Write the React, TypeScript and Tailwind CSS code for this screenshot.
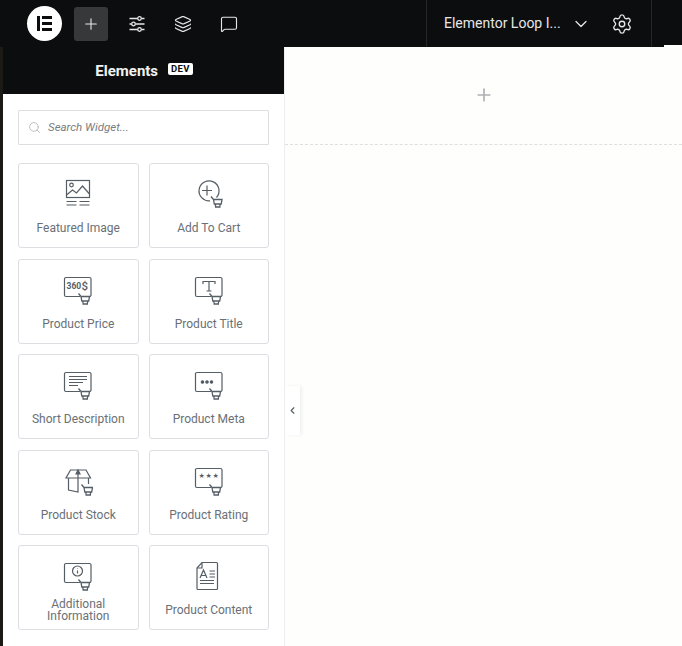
import { ChevronDown, ChevronLeft, Layers, MessageSquare, Plus, Search, Settings } from "lucide-react";
import type { ReactNode } from "react";

const Cart = ({ x, y }: { x: number; y: number }) => (
  <g transform={`translate(${x} ${y})`} strokeWidth="1.300">
    <path d="M0 0l2.500 3h8.500l-.8 4.500H3.300L2.500 3" fill="#fff" />
    <path d="M4.300 7.500l.4 3M9.200 7.500l-.4 3M4 10.500h5.500" />
  </g>
);

// speech-box shape shared by the product widgets
const Box = ({ children }: { children?: ReactNode }) => (
  <>
    <path d="M17 21.500H3a1.500 1.500 0 0 1-1.500-1.500V4A1.500 1.500 0 0 1 3 2.500h23.500A1.500 1.500 0 0 1 28 4v16a1.500 1.500 0 0 1-1.500 1.500H26" />
    {children}
    <Cart x={15.500} y={18.500} />
  </>
);

const icons: Record<string, ReactNode> = {
  image: (
    <>
      <rect x="3.500" y="1.500" width="23" height="17" />
      <circle cx="8.500" cy="6" r="1.800" />
      <path d="M3.500 16l6-5 4 3 6-7 7 8" />
      <path d="M3.500 22.500h10M16.500 22.500h10M3.500 26h10M16.500 26h10" />
    </>
  ),
  cart: (
    <>
      <path d="M22.500 18.500A10 10 0 1 0 16 21.800" />
      <path d="M13 6.500v10M8 11.500h10" />
      <Cart x={17} y={17.500} />
    </>
  ),
  price: (
    <Box>
      <text x="3.500" y="14" fontSize="8.500" fontWeight="700" fill="#555d65" stroke="none" fontFamily="Roboto, sans-serif">360</text>
      <text x="18.500" y="14.500" fontSize="11.500" fontWeight="500" fill="#555d65" stroke="none" fontFamily="Roboto, sans-serif">$</text>
    </Box>
  ),
  title: (
    <Box>
      <path d="M9 9V6.500h12V9M15 6.500V16M12.500 16h5" />
    </Box>
  ),
  description: (
    <Box>
      <path d="M6 6.500h18M6 9.500h18M6 12.500h14M6 15.500h9" />
    </Box>
  ),
  meta: (
    <Box>
      <circle cx="8.500" cy="12" r="1.200" fill="#555d65" />
      <circle cx="13" cy="12" r="1.200" fill="#555d65" />
      <circle cx="17.500" cy="12" r="1.200" fill="#555d65" />
    </Box>
  ),
  stock: (
    <>
      <path d="M15 4H7.500L3 12h12zM15 4h8l4.500 8H15z" />
      <path d="M5.500 12v12l9.500 2V12M25.500 12v6" />
      <path d="M13 8l2-4 2 4z" fill="#555d65" />
      <Cart x={18.500} y={18.500} />
    </>
  ),
  rating: (
    <Box>
      <text x="4.500" y="11.500" fontSize="7" letterSpacing="0.700" fill="#555d65" stroke="none" fontFamily="DejaVu Sans, sans-serif">★★★</text>
    </Box>
  ),
  info: (
    <Box>
      <circle cx="14.500" cy="10" r="5" />
      <path d="M14.500 9.500v3M14.500 7.500v.5" />
    </Box>
  ),
  content: (
    <>
      <path d="M8 1.500h14.500a1 1 0 0 1 1 1v25a1 1 0 0 1-1 1H4a1 1 0 0 1-1-1V7z" />
      <path d="M8 1.500V7H3" />
      <path d="M6 17l3.500-8 3.500 8M7.200 14.500h4.600M6 19.500h14M6 22.500h14M15.500 10H21M15.500 13H21M15.500 16H21" />
    </>
  ),
};

const widgets = [
  { label: "Featured Image", icon: "image" },
  { label: "Add To Cart", icon: "cart" },
  { label: "Product Price", icon: "price" },
  { label: "Product Title", icon: "title" },
  { label: "Short Description", icon: "description" },
  { label: "Product Meta", icon: "meta" },
  { label: "Product Stock", icon: "stock" },
  { label: "Product Rating", icon: "rating" },
  { label: "Additional Information", icon: "info" },
  { label: "Product Content", icon: "content" },
];

const WidgetCard = ({ label, icon }: { label: string; icon: string }) => (
  <div className="flex h-[85px] flex-col items-center rounded-[3px] border border-[#dcdee2] bg-white pt-[15px]">
    <svg viewBox="0 0 30 30" className="h-[30px] w-[30px] shrink-0" fill="none" stroke="#555d65" strokeWidth="1.200">
      {icons[icon]}
    </svg>
    <div className="flex flex-1 items-center text-center text-[12px] leading-[12px] text-[#6a7076]">
      <span className={label.length > 20 ? "w-[70px]" : ""}>{label}</span>
    </div>
  </div>
);

const Sliders = () => (
  <svg viewBox="0 0 18 18" className="h-[18px] w-[18px]" fill="none" stroke="currentColor" strokeWidth="1.300">
    <path d="M1.500 3.500h8M13.500 3.500h3M1.500 9h2M7.500 9h9M1.500 14.500h8M13.500 14.500h3" />
    <circle cx="11.500" cy="3.500" r="1.800" />
    <circle cx="5.500" cy="9" r="1.800" />
    <circle cx="11.500" cy="14.500" r="1.800" />
  </svg>
);

export default function App() {
  return (
    <div className="flex h-[646px] w-[682px] flex-col overflow-hidden bg-[#fefefd] font-['Roboto',sans-serif]">
      <header className="relative flex h-[47px] shrink-0 items-center bg-[#0c0d0e] text-[#e6e7e8]">
        <div className="ml-[27px] flex h-[35px] w-[35px] items-center justify-center gap-[2px] rounded-full bg-white">
          <span className="h-[15px] w-[3.500px] bg-[#0c0d0e]" />
          <span className="flex h-[15px] w-[10px] flex-col justify-between">
            <span className="h-[3px] bg-[#0c0d0e]" />
            <span className="h-[3px] bg-[#0c0d0e]" />
            <span className="h-[3px] bg-[#0c0d0e]" />
          </span>
        </div>
        <div className="ml-[12px] flex h-[34px] w-[34px] items-center justify-center rounded-[3px] bg-[#37383a]">
          <Plus size={18} strokeWidth={1.5} />
        </div>
        <div className="ml-[20px] flex items-center gap-[28px]">
          <Sliders />
          <Layers size={18} strokeWidth={1.5} />
          <MessageSquare size={18} strokeWidth={1.5} />
        </div>
        <div className="ml-auto flex h-full w-[226px] items-center border-x border-[#26272a] pl-[17px]">
          <span className="text-[14px] text-[#e6e7e8]">Elementor Loop I...</span>
          <ChevronDown size={20} strokeWidth={1.5} className="ml-[10px]" />
          <Settings size={22} strokeWidth={1.5} className="ml-[20px]" />
        </div>
        <div className="w-[30px]" />
        <span className="absolute bottom-0 right-0 h-[2px] w-[18px] bg-[#fefefd]" />
      </header>

      <div className="flex flex-1">
        <div className="w-[3px] bg-[#1c1a16]" />
        <aside className="flex w-[282px] flex-col border-r border-[#eeeeee] bg-white">
          <div className="flex h-[47px] items-center justify-center bg-[#0c0d0e] pl-[1px] pt-[2px]">
            <span className="text-[15px] font-bold text-[#f2f2f2]">Elements</span>
            <span className="mb-[6px] ml-[10px] rounded-[2px] bg-white px-[3px] text-[9.500px] font-bold leading-[12px] tracking-[0.3px] text-[#0c0d0e]">
              DEV
            </span>
          </div>
          <div className="px-[15px] pt-[16px]">
            <div className="flex h-[35px] w-[251px] items-center rounded-[1px] border border-[#dcdee2] pl-[9px]">
              <Search size={13} strokeWidth={1.5} className="text-[#aeb1b4]" />
              <span className="ml-[7px] text-[11.500px] italic text-[#7a7d80]">Search Widget...</span>
            </div>
            <div className="mt-[18px] grid w-[251px] grid-cols-2 gap-x-[10px] gap-y-[10.500px]">
              {widgets.map((w) => (
                <WidgetCard key={w.label} label={w.label} icon={w.icon} />
              ))}
            </div>
          </div>
        </aside>

        <main className="relative flex-1">
          <div className="flex h-[98px] items-center justify-center border-b border-dashed border-[#dddfe0] pb-[2px]">
            <Plus size={20} strokeWidth={2} className="text-[#aeb0b3]" />
          </div>
          <div className="absolute left-0 top-[339px] flex h-[49px] w-[15px] items-center justify-center bg-white shadow-[2px_0_3px_rgba(0,0,0,0.06)]">
            <ChevronLeft size={11} strokeWidth={2.5} className="text-[#555d65]" />
          </div>
        </main>
      </div>
    </div>
  );
}
